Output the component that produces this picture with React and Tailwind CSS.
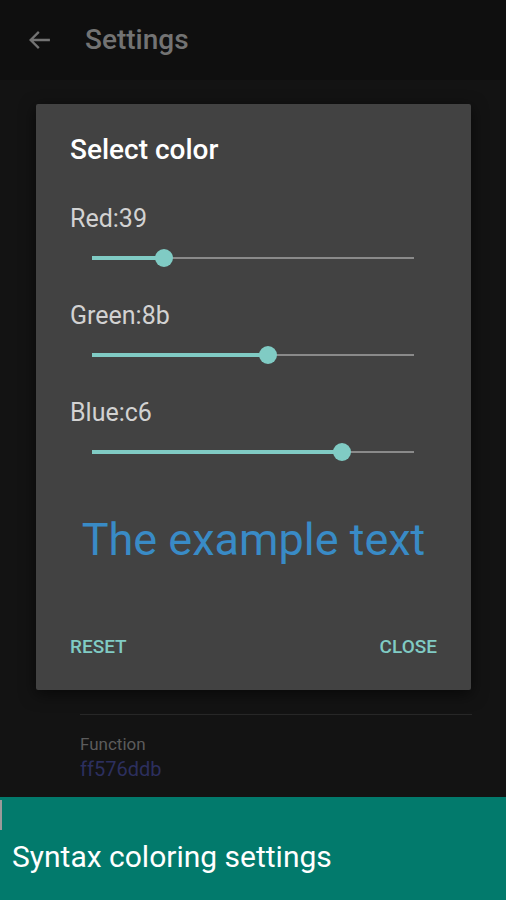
import React from "react";

const channels = [
  { name: "Red", hex: "39" },
  { name: "Green", hex: "8b" },
  { name: "Blue", hex: "c6" },
];

const Slider = ({ value }) => {
  const pct = (value / 255) * 100;
  return (
    <div className="relative h-[24px] ml-[22px] mr-[23px]">
      <div className="absolute left-0 right-0 top-[11px] h-[2px] bg-[#8a8a8a]" />
      <div
        className="absolute left-0 top-[10px] h-[4px] bg-[#80cbc4]"
        style={{ width: `${pct}%` }}
      />
      <div
        className="absolute top-[3px] w-[18px] h-[18px] -ml-[9px] rounded-full bg-[#80cbc4]"
        style={{ left: `${pct}%` }}
      />
    </div>
  );
};

const App = () => {
  return (
    <div
      className="relative w-[506px] h-[900px] overflow-hidden bg-[#131313] flex flex-col"
      style={{ fontFamily: "Roboto, 'Noto Sans', sans-serif" }}
    >
      {/* Toolbar */}
      <div className="h-[80px] flex items-center bg-[#0f0f0f]">
        <svg
          className="ml-[26px] w-[28px] h-[28px] text-[#737373]"
          viewBox="0 0 24 24"
          fill="none"
          stroke="currentColor"
          strokeWidth="2"
        >
          <path d="M20.5 12H4M11 5l-7 7 7 7" />
        </svg>
        <span className="ml-[31px] text-[28px] font-medium text-[#737373]">Settings</span>
      </div>

      {/* Settings list (behind dialog) */}
      <div className="flex-1 flex flex-col justify-end pb-[16px]">
        <div className="ml-[80px] mr-[34px] h-px bg-[#272727]" />
        <div className="ml-[80px] mt-[19px] text-[17px] leading-[20px] text-[#5c5c5c]">Function</div>
        <div className="ml-[80px] mt-[3px] text-[20px] leading-[24px] text-[#2c2f5e]">ff576ddb</div>
      </div>

      {/* Bottom banner */}
      <div className="relative h-[103px] bg-[#027a6c] flex items-center">
        <div className="absolute left-0 top-[3px] w-[2px] h-[30px] bg-[#9a9a9a]" />
        <span className="ml-[12px] mt-[16px] text-[30px] text-white">
          Syntax coloring settings
        </span>
      </div>

      {/* Dialog */}
      <div className="absolute left-[36px] top-[104px] w-[435px] h-[586px] bg-[#424242] rounded-[2px] shadow-[0_4px_16px_rgba(0,0,0,0.6)] flex flex-col">
        <div className="px-[34px] pt-[30px]">
          <div className="text-[28px] leading-[32px] font-medium text-white">Select color</div>
          <div className="mt-[39px]">
            {channels.map((c) => (
              <div key={c.name} className="pb-[32px]">
                <div className="text-[25px] leading-[28px] text-[#d2d2d2]">
                  {c.name}:{c.hex}
                </div>
                <div className="mt-[13px]">
                  <Slider value={parseInt(c.hex, 16)} />
                </div>
              </div>
            ))}
          </div>
        </div>
        <div className="mt-[18px] text-center text-[45px] leading-[52px] text-[#398bc6]">
          The example text
        </div>
        <div className="mt-[69px] px-[34px] flex justify-between text-[19px] leading-[24px] font-medium text-[#80cbc4]">
          <span>RESET</span>
          <span>CLOSE</span>
        </div>
      </div>
    </div>
  );
};

export default App;
